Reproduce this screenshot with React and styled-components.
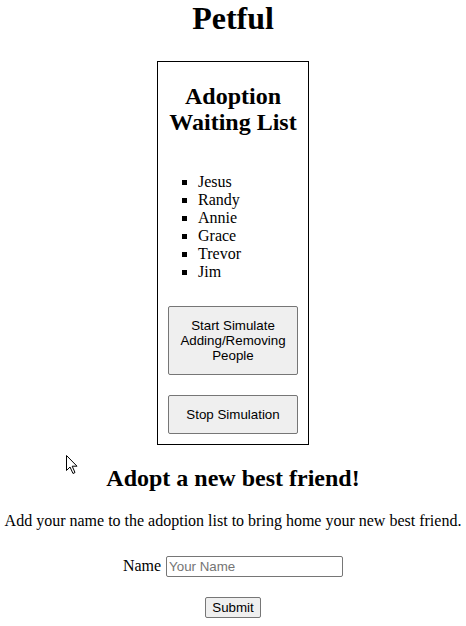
import React from "react";
import styled, { createGlobalStyle } from "styled-components";

const GlobalStyle = createGlobalStyle`
  html, body {
    margin: 0;
    padding: 0;
    background: #ffffff;
  }
  body {
    font-family: "Liberation Serif", "Times New Roman", serif;
    font-size: 16px;
    color: #000000;
  }
`;

const Page = styled.div`
  position: relative;
  width: 466px;
  min-height: 626px;
`;

const Title = styled.h1`
  margin: 0;
  font-size: 32px;
  line-height: 37px;
  font-weight: bold;
  text-align: center;
`;

const WaitingBox = styled.section`
  width: 150px;
  margin: 24px auto 0;
  border: 1px solid #000000;
  display: flex;
  flex-direction: column;
`;

const BoxHeading = styled.h2`
  margin: 21px 0 0;
  font-size: 24px;
  line-height: 26px;
  font-weight: bold;
  text-align: center;
`;

const WaitList = styled.ul`
  margin: 38px 0 0;
  padding: 0 0 0 40px;
  list-style-type: square;
`;

const WaitItem = styled.li`
  line-height: 18px;
`;

const ButtonStack = styled.div`
  display: flex;
  flex-direction: column;
  gap: 20px;
  padding: 25px 10px 10px;
`;

const SimButton = styled.button`
  font-family: "Liberation Sans", Arial, sans-serif;
  font-size: 13.333px;
  line-height: 15px;
  color: #000000;
  background: #efefef;
  border: 1px solid #767676;
  border-radius: 2px;
  padding: 11px 6px;
  text-align: center;
  width: 100%;
`;

const AdoptHeading = styled.h2`
  margin: 19px 0 0;
  font-size: 24px;
  line-height: 28px;
  font-weight: bold;
  text-align: center;
`;

const Intro = styled.p`
  margin: 20px 0 0;
  line-height: 18px;
  text-align: center;
`;

const Form = styled.form`
  display: flex;
  flex-direction: column;
  align-items: center;
  gap: 20px;
  margin-top: 26px;
`;

const Field = styled.div`
  display: flex;
  align-items: baseline;
  gap: 5px;
  line-height: 18px;
`;

const Label = styled.label`
  font-size: 16px;
`;

const TextInput = styled.input`
  box-sizing: border-box;
  width: 177px;
  height: 21px;
  font-family: "Liberation Sans", Arial, sans-serif;
  font-size: 13.333px;
  line-height: 15px;
  padding: 1px 2px;
  border: 1px solid #767676;
  border-radius: 2px;
  background: #ffffff;
  color: #000000;
  &::placeholder {
    color: #757575;
  }
`;

const SubmitButton = styled.button`
  box-sizing: border-box;
  height: 21px;
  font-family: "Liberation Sans", Arial, sans-serif;
  font-size: 13.333px;
  line-height: 15px;
  padding: 1px 6px;
  color: #000000;
  background: #efefef;
  border: 1px solid #767676;
  border-radius: 2px;
`;

const Cursor = styled.svg`
  position: absolute;
  left: 65px;
  top: 454px;
  width: 13px;
  height: 21px;
`;

const people = ["Jesus", "Randy", "Annie", "Grace", "Trevor", "Jim"];

export default function App() {
  return (
    <Page>
      <GlobalStyle />
      <Title>Petful</Title>
      <WaitingBox>
        <BoxHeading>
          Adoption
          <br />
          Waiting List
        </BoxHeading>
        <WaitList>
          {people.map((p) => (
            <WaitItem key={p}>{p}</WaitItem>
          ))}
        </WaitList>
        <ButtonStack>
          <SimButton type="button">Start Simulate Adding/Removing People</SimButton>
          <SimButton type="button">Stop Simulation</SimButton>
        </ButtonStack>
      </WaitingBox>
      <AdoptHeading>Adopt a new best friend!</AdoptHeading>
      <Intro>Add your name to the adoption list to bring home your new best friend.</Intro>
      <Form onSubmit={(e) => e.preventDefault()}>
        <Field>
          <Label htmlFor="name">Name</Label>
          <TextInput id="name" type="text" placeholder="Your Name" />
        </Field>
        <SubmitButton type="submit">Submit</SubmitButton>
      </Form>
      <Cursor viewBox="0 0 13 21" aria-hidden="true">
        <path
          d="M1.5 1.5 V16.5 L5 13 L8 19.5 L10 18.5 L7.2 12.2 H12 Z"
          fill="#ffffff"
          stroke="#000000"
          strokeWidth="1"
          strokeLinejoin="miter"
        />
      </Cursor>
    </Page>
  );
}
